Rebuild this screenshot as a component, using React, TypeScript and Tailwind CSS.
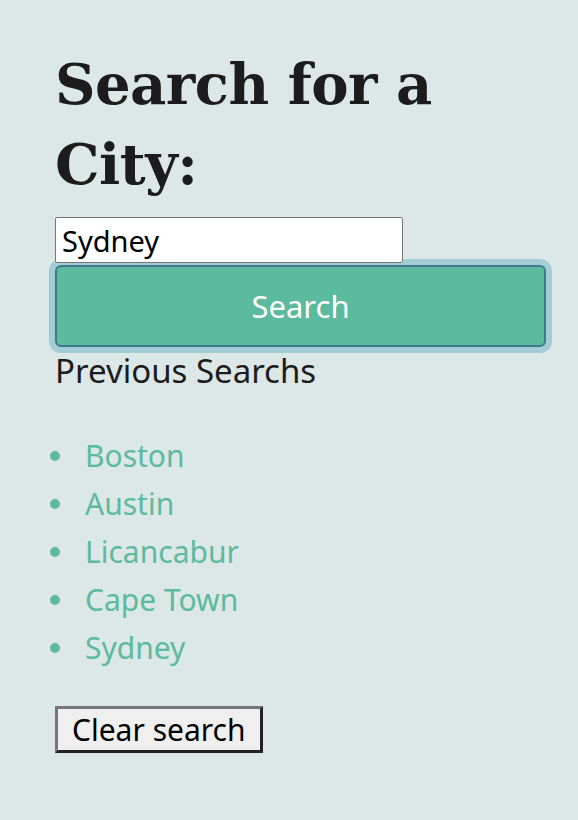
import React, { useState } from 'react';

const cities = ['Boston', 'Austin', 'Licancabur', 'Cape Town', 'Sydney'];

const App = () => {
  const [query, setQuery] = useState('Sydney');

  return (
    <div className="min-h-screen w-full bg-[#dce7e7] font-['Noto_Sans',sans-serif]">
      <div className="w-[491px] pl-[55px] pt-[44px] box-content">
        <h1 className="font-['DejaVu_Serif',serif] font-bold text-[56px] leading-[80px] text-[#1c1c1c] tracking-[-0.5px]">
          Search for a City:
        </h1>
        <div className="mt-[13px] flex flex-col">
          <input
            value={query}
            onChange={(e) => setQuery(e.target.value)}
            className="relative z-10 w-[348px] h-[46px] bg-white border border-[#767676] rounded-[2px] px-[6px] text-[29px] text-black outline-none"
          />
          <button className="mt-[2px] h-[82px] w-full rounded-[6px] bg-[#5cba9e] border-2 border-[#3d7a8b] ring-[6px] ring-[#a3ccd4] text-white text-[31px]">
            Search
          </button>
        </div>
        <h2 className="mt-[4px] text-[33px] leading-[40px] text-[#1c1c1c]">Previous Searchs</h2>
        <ul className="mt-[41px] -ml-[5px]">
          {cities.map((c) => (
            <li key={c} className="flex items-center h-[48px] text-[30px] leading-[48px] text-[#5cba9e]">
              <span className="w-[10px] h-[10px] rounded-full bg-[#5cba9e] mr-[25px] shrink-0" />
              {c}
            </li>
          ))}
        </ul>
        <button className="mt-[34px] h-[47px] px-[14px] bg-[#efefef] border-[3px] border-t-[#767676] border-l-[#767676] border-b-[#222] border-r-[#222] text-[30px] leading-none text-black">
          Clear search
        </button>
      </div>
    </div>
  );
};

export default App;
